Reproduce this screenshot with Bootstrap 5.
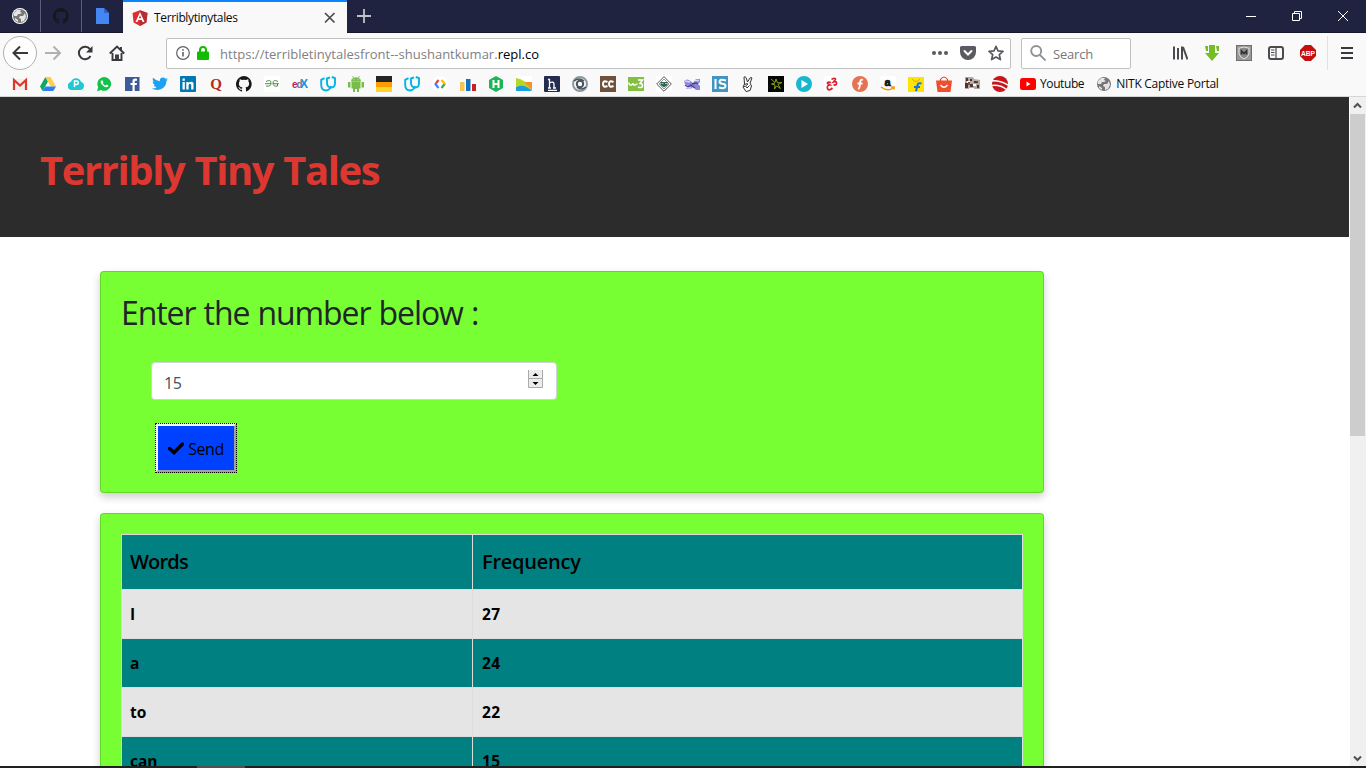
<!DOCTYPE html>
<html lang="en">
<head>
<meta charset="utf-8">
<meta name="viewport" content="width=device-width, initial-scale=1">
<title>Terriblytinytales</title>
<link href="https://cdn.jsdelivr.net/npm/bootstrap@5.3.0/dist/css/bootstrap.min.css" rel="stylesheet">
<style>
body{font-family:"Open Sans","Noto Sans",sans-serif;color:#212529}
.chrome-text{font-size:12px;line-height:16px;color:#0c0c0d;white-space:nowrap}
.tabstrip{height:33px;background:#202340;border-bottom:1px solid #15172b}
.pinned{width:41px;height:32px;border-right:1px solid #5c5e75}
.pinned.last-pin{border-right:0}
.tab-current{width:224px;height:33px;background:#f9f9fa;border-top:2px solid #0a84ff;padding:0 10px 0 9px}
.win-controls{width:138px}
.win-controls>span{width:46px}
.toolbar{height:40px;background:#f9f9fa}
.field{height:31px;background:#fff;border:1px solid #c0c0c0;border-radius:2px}
.urltext{font-size:13px;letter-spacing:.01px;color:#808084}
.backbtn{width:34px;height:34px;border:1px solid #b1b1b1;border-radius:50%;background:#fdfdfd;margin-left:3px}
.bookmarks{height:24px;background:#f9f9fa;border-bottom:1px solid #d6d6d8;padding:3px 0 0 12px;gap:12px}
.bookmarks svg,.ico{width:16px;height:16px;flex:none;display:block}
.viewport-area{height:669px}
.page-pane{width:1349px}
.site-header{height:140px;background:#2c2c2c;padding:44px 40px}
.site-title{font-size:40px;font-weight:700;line-height:58px;color:#dc3831;white-space:nowrap;letter-spacing:-1.4px;word-spacing:1px}
.panel-card{width:944px;background:#78ff33;border-color:rgba(0,0,0,.16);border-radius:4px;box-shadow:0 4px 8px 0 rgba(0,0,0,.2)}
.panel-card .card-body{padding:20px}
.prompt{font-size:32px;font-weight:400;line-height:38px;letter-spacing:-1.1px;word-spacing:1px;white-space:nowrap}
.num-field{width:406px;height:38px;border:1px solid #ced4da;border-radius:4px;background:#fff;padding:0 13px 0 12px;color:#495057;font-size:16px}
.send.btn{width:82px;height:50px;outline:1px dotted #000;outline-offset:-1px;border:3px solid;border-color:#f6f6ff #a0a0a8 #a0a0a8 #f6f6ff;background:#0040ff;border-radius:0;color:#000;font-size:16px;letter-spacing:-.5px;padding:1px 0 0}
.freq{border-color:#dee2e6;table-layout:fixed;width:902px;font-weight:700;font-size:15.5px;border-collapse:collapse}
.freq td,.freq th{border:1px solid #ddd;padding:0 8px;height:49px;vertical-align:middle;line-height:24px;background:#e5e5e5;color:#000}
.freq td+td,.freq th+th{padding-left:9px;letter-spacing:.3px}
.freq th{height:55px;font-size:20px;letter-spacing:-.8px;font-weight:600}
.freq th+th{letter-spacing:-.25px}
.freq th,.freq tr:nth-child(even) td{background:#008080}
.freq th:first-child{width:351px}
.scroll-rail{width:16px;background:#f0f0f0}
.scroll-thumb{height:322px;width:15px;background:#cdcdcd}
.taskedge{height:2px;background:#202020;padding-left:197px}
.taskedge>span{width:48px;height:2px;background:#505050}
</style>
</head>
<body class="vh-100 overflow-hidden d-flex flex-column bg-white">
<svg width="0" height="0" class="position-absolute" aria-hidden="true">
<defs>
<symbol id="globe" viewBox="0 0 16 16"><circle cx="8" cy="8" r="7" fill="#777"/><path d="M2 5 5 2l4 0-1 2 2 1-2 1-2 0-1 2-3 0zM8 8l3 0 2-3 1 4-2 4-3 1 0-3-2-1zM3 10l3 2 0 2-3-2z" fill="#e4e4e4"/></symbol>
<symbol id="cat" viewBox="0 0 16 16"><path d="M8 0a8 8 0 0 0-2.53 15.59c.4.07.55-.17.55-.38v-1.49c-2.23.48-2.7-1.07-2.7-1.07-.36-.93-.89-1.18-.89-1.18-.73-.5.06-.49.06-.49.8.06 1.23.83 1.23.83.71 1.22 1.87.87 2.33.66.07-.52.28-.87.5-1.07-1.77-.2-3.64-.89-3.64-3.95 0-.87.31-1.59.82-2.15-.08-.2-.36-1.02.08-2.12 0 0 .67-.21 2.2.82a7.6 7.6 0 0 1 4 0c1.53-1.04 2.2-.82 2.2-.82.44 1.1.16 1.92.08 2.12.51.56.82 1.27.82 2.15 0 3.07-1.87 3.75-3.65 3.95.29.25.54.73.54 1.48v2.2c0 .21.15.46.55.38A8 8 0 0 0 8 0z" fill="#15171a"/></symbol>
<symbol id="udacity" viewBox="0 0 16 16"><path d="M4.500 2.200 1.200 3.800V9q.3 5.500 4.800 5.500 3.500 0 5-4.500M11.800 1 15 2.200V7q0 4.500-3.500 4.500Q7 11.500 7 7V2.500L10 1.300" fill="none" stroke="#02b3e4" stroke-width="1.900"/></symbol>
</defs>
</svg>

<!-- Tab strip -->
<div class="tabstrip d-flex flex-shrink-0">
  <div class="pinned d-flex align-items-center justify-content-center"><svg class="ico" viewBox="0 0 16 16"><circle cx="8" cy="8" r="8" fill="#fff"/><use href="#globe" width="16" height="16"/></svg></div>
  <div class="pinned d-flex align-items-center justify-content-center"><svg class="ico"><use href="#cat"/></svg></div>
  <div class="pinned last-pin d-flex align-items-center justify-content-center"><svg class="ico" viewBox="0 0 16 16"><path d="M1 0h8l5 5v11H1z" fill="#4587f2"/><path d="m9 .5 4.500 4.500H9z" fill="#2b63c6"/></svg></div>
  <div class="tab-current d-flex align-items-center">
    <svg class="ico" viewBox="0 0 16 16"><path d="m8 .3 7.500 2.600-1.100 9.700L8 16l-6.400-3.400L.5 2.900z" fill="#df2e31"/><path d="m8 .3 7.500 2.600-1.100 9.700L8 16z" fill="#b52e31"/><path d="M8 2 3.500 12h1.900l.9-2.100h3.400l.9 2.100h1.900zM8 5.300l1.200 3H6.800z" fill="#fff" fill-rule="evenodd"/></svg>
    <span class="chrome-text ms-1 flex-grow-1" style="letter-spacing:-.36px;padding-left:2px">Terriblytinytales</span>
    <svg width="14" height="14" viewBox="0 0 14 14"><path d="m2 2 9.500 9.500m0-9.500L2 11.500" stroke="#4a4a4f" stroke-width="1.700"/></svg>
  </div>
  <div class="d-flex align-items-center" style="padding-left:10px"><svg width="14" height="14" viewBox="0 0 14 14"><path d="M7 0v14M0 7h14" stroke="#c2c2ca" stroke-width="1.800"/></svg></div>
  <div class="win-controls d-flex ms-auto align-items-center">
    <span class="d-flex justify-content-center"><svg width="10" height="10"><path d="M0 5.500h10" stroke="#fff"/></svg></span>
    <span class="d-flex justify-content-center"><svg width="10" height="10" fill="none" stroke="#fff"><path d="M.5 2.500h7v7h-7zM2.500 2.500v-2h7v7h-2"/></svg></span>
    <span class="d-flex justify-content-center"><svg width="10" height="10"><path d="m0 0 10 10M10 0 0 10" stroke="#fff"/></svg></span>
  </div>
</div>

<!-- Navigation toolbar -->
<div class="toolbar d-flex align-items-center flex-shrink-0">
  <span class="backbtn d-flex align-items-center justify-content-center"><svg class="ico" viewBox="0 0 16 16" fill="none" stroke="#38383d" stroke-width="2"><path d="M1 8h15M8 1.500 1.500 8 8 14.500"/></svg></span>
  <svg class="ico" style="margin-left:8px" viewBox="0 0 16 16" fill="none" stroke="#b1b1b3" stroke-width="2"><path d="M0 8h15M8.500 1.500 15 8l-6.500 6.500"/></svg>
  <svg class="ico ms-3" viewBox="0 0 16 16"><path d="M13.500 11A6.200 6.200 0 1 1 13 4.200" fill="none" stroke="#38383d" stroke-width="2"/><path d="M15.500 1v6.500H9z" fill="#38383d"/></svg>
  <svg class="ico ms-3" viewBox="0 0 16 16"><path d="m.8 8.500 7.200-7 7.200 7M3.500 8v7H12.500V8M7 15v-4.500h2V15M12 2v3" fill="none" stroke="#38383d" stroke-width="1.900"/></svg>
  <div class="field d-flex align-items-center" style="width:845px;margin-left:41px;padding:0 6px 0 9px">
    <svg width="14" height="14" viewBox="0 0 14 14"><circle cx="7" cy="7" r="6.300" fill="none" stroke="#606066" stroke-width="1.200"/><path d="M7 6v4.500M7 3.200v1.500" stroke="#606066" stroke-width="1.600"/></svg>
    <svg width="12" height="14" viewBox="0 0 12 14" style="margin-left:7px"><path d="M3 7V4a3 3 0 0 1 6 0v3" fill="none" stroke="#12bc00" stroke-width="2"/><rect y="5.500" width="12" height="8.500" rx="1" fill="#12bc00"/></svg>
    <span class="chrome-text urltext flex-grow-1 pt-1" style="margin-left:11px;margin-bottom:2px">https://terribletinytalesfront--shushantkumar.<span class="text-black">repl.co</span></span>
    <svg class="ico" viewBox="0 0 16 16" fill="#5a5a5f"><circle cx="2" cy="8" r="2"/><circle cx="8" cy="8" r="2"/><circle cx="14" cy="8" r="2"/></svg>
    <svg class="ico" style="margin-left:12px" viewBox="0 0 16 16"><path d="M1.500 1h13A1.500 1.500 0 0 1 16 2.500V7A8 8 0 0 1 0 7V2.500A1.500 1.500 0 0 1 1.500 1z" fill="#5a5a5f"/><path d="m4.500 6 3.500 3.500L11.500 6" fill="none" stroke="#fff" stroke-width="2" stroke-linecap="round"/></svg>
    <svg class="ico" style="margin-left:12px" viewBox="0 0 16 16"><path d="m8 1.300 2 4.500 5 .5-3.700 3.300 1.100 5L8 12l-4.400 2.600 1.100-5L1 6.300l5-.5z" fill="none" stroke="#5a5a5f" stroke-width="1.700" stroke-linejoin="round"/></svg>
  </div>
  <div class="field d-flex align-items-center" style="width:110px;margin-left:10px;padding-left:8px">
    <svg class="ico" viewBox="0 0 16 16" fill="none" stroke="#929295" stroke-width="1.900"><circle cx="6.200" cy="6" r="5"/><path d="m10 10 5.500 5.500"/></svg>
    <span class="chrome-text pt-1" style="margin:0 0 2px 7px;font-size:13px;letter-spacing:-.2px;color:#77777b">Search</span>
  </div>
  <div class="d-flex" style="margin-left:41px;gap:16px">
    <svg class="ico" viewBox="0 0 16 16" stroke="#4a4a4f" stroke-width="2"><path d="M2 1.500v13M6 3v11.500M10 1.500v13M11 2l4.500 12.500" fill="none"/></svg>
    <svg class="ico" viewBox="0 0 16 16"><path d="M5 0h6v8h4l-7 8-7-8h4zM1 1h3v5H2zM12 1h3v5h-2z" fill="#75bd24"/></svg>
    <svg class="ico" viewBox="0 0 16 16"><rect width="16" height="16" fill="#6e6e6e"/><rect x="1" y="1" width="14" height="14" fill="#999"/><path d="m8 2 5 1.200v5.300q-1 4-5 5.500Q4 12.500 3 8.500V3.200z" fill="#8a8a8a" stroke="#e4e4e4"/><path d="M5.500 9.500V6L8 8.500 10.500 6v3.500" fill="none" stroke="#333" stroke-width="1.600"/></svg>
    <svg class="ico" viewBox="0 0 16 16"><rect x="1" y="2" width="14" height="12" rx="2" fill="none" stroke="#4a4a4f" stroke-width="2"/><path d="M8 2v12M3 5h3.500M3 7.500h3.500M3 10h3.500" stroke="#4a4a4f" stroke-width="1.200"/></svg>
    <svg class="ico" viewBox="0 0 16 16"><path d="M5 0h6l5 5v6l-5 5H5l-5-5V5z" fill="#c70d0e"/><text x="8" y="10.700" text-anchor="middle" font-family="Liberation Sans" font-weight="700" font-size="7.500" fill="#fff" textLength="14" lengthAdjust="spacingAndGlyphs">ABP</text></svg>
  </div>
  <div class="border-start d-flex align-items-center" style="margin-left:11px;height:34px;padding-left:13px"><svg width="12" height="12" viewBox="0 0 12 12"><path d="M0 1h12M0 6h12M0 11h12" stroke="#38383d" stroke-width="1.900"/></svg></div>
</div>

<!-- Bookmarks bar -->
<div class="bookmarks d-flex flex-shrink-0">
  <svg viewBox="0 0 16 16"><path d="M1 3h14v11H1z" fill="#f0eeee"/><path d="M2 14V4l6 5.500L14 4v10" fill="none" stroke="#d8392b" stroke-width="2.200"/></svg>
  <svg viewBox="0 0 16 16"><path d="m5.400 1-5.400 9.500 2.600 4.500L8 5.500z" fill="#0da960"/><path d="M5.400 1h5.200l5.400 9.500h-5.300z" fill="#ffcf48"/><path d="m2.600 15 2.700-4.500H16L13.300 15z" fill="#2d7ff2"/></svg>
  <svg viewBox="0 0 16 16"><path d="M4 14a4 4 0 0 1-3-7q1.500-1.200 2-1.300a5.300 5.300 0 0 1 10 0q3 1 3 4.300-.3 4-4 4z" fill="#20c8d2"/><path d="M6.500 11V5h2a1.600 1.600 0 0 1 0 3.500h-2" fill="none" stroke="#fff" stroke-width="1.500"/></svg>
  <svg viewBox="0 0 16 16"><path d="M8.300 1A6.900 6.900 0 1 1 5 14l-4 1.200 1.200-4A6.900 6.900 0 0 1 8.300 1z" fill="#12c24b"/><path d="M5.200 4.500q-1.500 1.300.5 3.800 2.500 3 4.800 3 2.300-.5 1.800-2L10.500 8.500l-1 1.200Q7.800 9 6.700 7.300l.8-1-.8-1.800z" fill="#fff"/></svg>
  <svg viewBox="0 0 16 16"><rect x="1" y="1" width="14.500" height="14" fill="#3d5a9b"/><path d="M10.700 15V9h2l.3-2h-2.300V5.700q0-1 1.200-1H13V2.800q-4.500-1-4.500 2.500V7h-2v2h2v6z" fill="#fff"/></svg>
  <svg viewBox="0 0 16 16"><path d="M16 3.500 14.400 5c.2 7-7.600 11.500-14.400 7.600q3 0 4.700-1.400-2.300-.3-3-2.300h1.400Q.6 8 .6 5.500l1.400.4Q-.1 4 1.200 1.700q2.700 3.200 6.700 3.500C7.100 1.300 11.400.3 13.500 2.700l2-.8-1.300 1.800z" fill="#1da1f2"/></svg>
  <svg viewBox="0 0 16 16"><rect width="16" height="16" rx="1" fill="#0078b5"/><path d="M2.500 6h2.300v7.500H2.500zM2.500 2.500h2.300v2.200H2.500zM6.300 6h2.200v1q3-2.500 5 0v6.500h-2.300V9q-1.200-2.500-2.600 0v4.500H6.300z" fill="#fff"/></svg>
  <svg viewBox="0 0 16 16"><text x="8" y="12.500" text-anchor="middle" font-family="Liberation Serif" font-weight="700" font-size="15" fill="#b42b18">Q</text></svg>
  <svg><use href="#cat"/></svg>
  <svg viewBox="0 0 16 16"><rect width="16" height="16" fill="#fff"/><path d="M2 5.500Q7 3 7 7t-5 3M1 7.700h6M14 5.500Q9 3 9 7t4.500 3V8M9 7.700h6" fill="none" stroke="#4b8b45"/></svg>
  <svg viewBox="0 0 16 16"><text x="0" y="12" font-family="Liberation Sans" font-weight="700" font-size="10" fill="#b52667">e</text><text x="4.500" y="12" font-family="Liberation Sans" font-weight="700" font-size="10" fill="#70757c">d</text><text x="8" y="12" font-family="Liberation Sans" font-weight="700" font-size="12" fill="#168fe0">X</text></svg>
  <svg><use href="#udacity"/></svg>
  <svg viewBox="0 0 16 16" fill="#77bd49"><path d="M3.500 6h9v6.500h-1.500V16H9v-3H7v3H5v-3.500H3.500zM0 6h2.500v5.500H0zM13.500 6H16v5.500h-2.500z"/><path d="M3.500 5.300Q3.500 1.800 8 1.800t4.500 3.500zM4.500 0l1.500 2.500M11.500 0 10 2.500" stroke="#77bd49" stroke-width=".8"/><path d="M5.500 3.500h1v.8h-1zM9.500 3.500h1v.8h-1z" fill="#fff"/></svg>
  <svg viewBox="0 0 16 16"><path fill="#242424" d="M0 0h16v6H0z"/><path fill="#fa9c02" d="M0 6h16v5H0z"/><path fill="#fdd52c" d="M0 11h16v5H0z"/></svg>
  <svg><use href="#udacity"/></svg>
  <svg viewBox="0 0 16 16"><circle cx="8" cy="8" r="8" fill="#fff"/><g fill="none" stroke-width="2.200"><path stroke="#ea4335" d="M6.500 4 3.500 8"/><path stroke="#4285f4" d="m3 7.500 3.500 4.500"/><path stroke="#34a853" d="m9.500 12 3.500-4.500"/><path stroke="#fbbc05" d="m9.500 4 3.500 4"/></g></svg>
  <svg viewBox="0 0 16 16"><path fill="#f4c455" d="M0 6h4.500v9H0z"/><path fill="#1173be" d="M6 3h4.500v12H6z"/><path fill="#c7202c" d="M12 8h4v7h-4z"/></svg>
  <svg viewBox="0 0 16 16"><path d="m8 0 7 4v8l-7 4-7-4V4z" fill="#1cb455"/><path d="M5.500 4v8M10.500 4v8M5.500 8h5" stroke="#fff" stroke-width="2"/></svg>
  <svg viewBox="0 0 16 16"><path fill="#fff" d="M0 0h16v16H0z"/><path d="M0 2q10 1 16 13-9-7-16-4z" fill="#b6d625"/><path d="M0 11q8-4 16 4H0z" fill="#18a0de"/><path d="m8 6 8 0v9q-4-6-8-9z" fill="#f69229"/></svg>
  <svg viewBox="0 0 16 16"><rect width="16" height="16" rx="1" fill="#242c50"/><path d="M5.500 3v9M5 7q5-2 5 1v4M4 3.500h2M4 12h3M9 12h3M4 14.300h9" fill="none" stroke="#fff" stroke-width="1.300"/></svg>
  <svg viewBox="0 0 16 16" fill="none"><circle cx="8" cy="8" r="7" stroke="#8d999f" stroke-width="2"/><circle cx="8" cy="8" r="3.200" stroke="#46555d" stroke-width="2"/><path d="M2 5q5-4 10 0M14 11q-5 4-9 0" stroke="#46555d" stroke-width="1.500"/></svg>
  <svg viewBox="0 0 16 16"><rect width="16" height="16" fill="#70513c"/><path d="M7.500 6Q3 4 3 8t4.500 2M13.500 6Q9 4 9 8t4.500 2" fill="none" stroke="#fff" stroke-width="2"/></svg>
  <svg viewBox="0 0 16 16"><rect y="1" width="16" height="14" fill="#83bf41"/><path d="M1 6.500q0 3 2 2.500t2-2q0 2.500 2 2t2-1.500M10 4h4.500l-2.500 3.500q3 0 2.500 2.500t-4.500 1" fill="none" stroke="#fff" stroke-width="1.500"/></svg>
  <svg viewBox="0 0 16 16"><path fill="#fff" d="M0 0h16v16H0z"/><path d="m8 .7 7.300 7.300L8 15.300.7 8z" fill="#fff" stroke="#555"/><path d="m8 3 5 5-5 5-5-5z" fill="none" stroke="#999"/><path d="M4.500 6h7v3L8 11.500 4.500 9z" fill="#2f6650"/><path d="M5.500 7.500h2M9 7.500h2" stroke="#a9cbbd"/></svg>
  <svg viewBox="0 0 16 16"><path d="M0 5q3-3 6.500 0L9 7l3-4h4v3l-2 2 2 2v4h-4l-3-3-2 2H2l2-3-3-2z" fill="#8d87d8"/><path d="m1 9 3 2 3-2 4 3M8 8l4-1 2 1" fill="none" stroke="#48428c" stroke-width="1.300"/><path d="m1 5 5 1M11 4.500h4M3 12h4" stroke="#d9d6ff" stroke-width="1.500"/></svg>
  <svg viewBox="0 0 16 16"><rect width="16" height="16" fill="#4095c1"/><path d="M3.500 3v10M14 4.500q-6.500-2-6.500 1 0 2 3 2.300 3 .2 3 2.500-.5 3-6.500 1.200" fill="none" stroke="#fff" stroke-width="2"/></svg>
  <svg viewBox="0 0 16 16" fill="#fff" stroke="#333" stroke-width="1" stroke-linejoin="round"><path d="M4 1q1.500-.5 2 .5L7.500 6 10 2q1-1 2 0l-2 5 1.500 3-1.500 4.500-4 1L3 11l1.500-3z"/><path d="M4.500 8.500Q7 7 8 8L5.500 10l1.500 2 2.500-2.500M5 10l-1.500 1" fill="none"/></svg>
  <svg viewBox="0 0 16 16"><rect width="16" height="16" fill="#050705"/><path d="m3 3 4 3.500L8 3l1.500 4 4.500-.5-4 2 2.500 4-4-2.500-2 3 .5-4-3.500-1 3.500-1" fill="none" stroke="#8c9f1e"/></svg>
  <svg viewBox="0 0 16 16"><circle cx="8" cy="8" r="8" fill="#19b7cf"/><path d="m5.500 4 6.500 4-6.500 4z" fill="#fff"/></svg>
  <svg viewBox="0 0 16 16"><path fill="#fff" d="M0 0h16v16H0z"/><path d="M7 6.500Q3 5.500 3.500 7.500L6 9Q2.500 9.500 3.500 12.500t5-.5M7.500 3.500q4-2.500 4 0L9.500 6q3.500-1 3 1.500t-3 1" fill="none" stroke="#de1f2b" stroke-width="1.700"/></svg>
  <svg viewBox="0 0 16 16"><circle cx="8" cy="8" r="8" fill="#e57352"/><path d="M11 4Q8.500 3 8.300 5.500L7.500 11q-.5 2-1.500 1.500M5.500 7.500h5" fill="none" stroke="#fff" stroke-width="1.800"/></svg>
  <svg viewBox="0 0 16 16"><rect width="16" height="16" fill="#fff"/><text x="7.500" y="10" text-anchor="middle" font-family="Liberation Sans" font-weight="700" font-size="11" stroke="#111" stroke-width=".7" fill="#111">a</text><path d="M1 11q7 5 12 1m-2-1h3v2.500" fill="none" stroke="#f79400" stroke-width="1.500"/></svg>
  <svg viewBox="0 0 16 16"><path d="M0 1h16v15H0z" fill="#ffe400"/><path d="M4 3q4 5 8 0" fill="none" stroke="#d4ac00"/><path d="M13.500 7.500q-4-1-4 2L8 15M6 11h6" fill="none" stroke="#1a72d2" stroke-width="2.100"/></svg>
  <svg viewBox="0 0 16 16"><path d="M0 4.500h16L14.500 16h-13z" fill="#f04e2c"/><path d="M4.500 6V3.500q3.500-5 7 0V6" fill="none" stroke="#db4a2a" stroke-width="1.200"/><path d="M4.500 9q3.500 4.500 7 0" fill="none" stroke="#fff" stroke-width="1.300"/></svg>
  <svg viewBox="0 0 16 16"><path d="M1 1h8l1 2 6 1v9H1z" fill="#b5aaa2"/><path d="M2 2h2v3H2zM6 3h2v2H6zM10 5h4v2h-4zM1 7h3v5H1zM6 8h3v3H6zM13 9h2v3h-2z" fill="#473836"/><path d="M3 5h3v2H3zM9 8h3v2H9zM5 12h5v1H5z" fill="#fff"/><path d="M4 6h2v3H4zM12 5h2v1h-2z" fill="#8c4943"/></svg>
  <svg viewBox="0 0 16 16"><circle cx="8" cy="8" r="8" fill="#c8141c"/><path d="M-1 5q8-1 17 4M0 9.500q8-1 14.500 4" fill="none" stroke="#fff" stroke-width="1.500"/></svg>
  <span class="d-flex align-items-center" style="height:16px"><svg viewBox="0 0 16 16"><rect y="2" width="16" height="12" rx="2.500" fill="#f00"/><path d="m6.500 5.500 4 2.500-4 2.500z" fill="#fff"/></svg><span class="chrome-text ms-1" style="letter-spacing:-.4px">Youtube</span></span>
  <span class="d-flex align-items-center" style="height:16px"><svg><use href="#globe"/></svg><span class="chrome-text ms-1" style="letter-spacing:-.27px">NITK Captive Portal</span></span>
</div>

<!-- Page and scrollbar -->
<div class="viewport-area d-flex flex-shrink-0 overflow-hidden">
  <main class="page-pane overflow-hidden">
    <header class="site-header"><h1 class="site-title mb-0">Terribly Tiny Tales</h1></header>
    <div class="d-flex flex-column" style="padding:34px 0 0 100px;gap:20px">
      <section class="card panel-card" style="height:222px"><div class="card-body">
        <h2 class="prompt mb-0" style="padding-top:2px">Enter the number below :</h2>
        <div class="num-field d-flex align-items-center justify-content-between" style="margin:30px 0 0 30px">
          <span class="pt-1" style="letter-spacing:-.5px">15</span>
          <svg width="15" height="18" viewBox="0 0 15 18" class="mb-1"><path d="M0 0h15v18H0z" fill="#ececec"/><path d="M.5 0v17.500h14V0M0 8.500h15" fill="none" stroke="#aaa"/><path d="M4.500 6h6L7.500 3zM4.500 12h6l-3 3z" fill="#000"/></svg>
        </div>
        <button class="send btn d-flex align-items-center justify-content-center" style="margin:23px 0 0 34px"><svg width="16" height="13" viewBox="0 0 16 13" class="me-1"><path d="m1.500 6.500 4.500 4 8.500-8.500" fill="none" stroke="#000" stroke-width="3.500" stroke-linecap="round"/></svg>Send</button>
      </div></section>
      <section class="card panel-card"><div class="card-body">
        <table class="table freq mb-0">
          <thead><tr><th>Words</th><th>Frequency</th></tr></thead>
          <tbody>
            <tr><td>I</td><td>27</td></tr>
            <tr><td>a</td><td>24</td></tr>
            <tr><td>to</td><td>22</td></tr>
            <tr><td>can</td><td>15</td></tr>
          </tbody>
        </table>
      </div></section>
    </div>
  </main>
  <div class="scroll-rail d-flex flex-column align-items-center" style="margin-left:1px">
    <svg width="16" height="17" viewBox="0 0 16 17" class="flex-shrink-0"><path d="m4 10.500 3.500-3.500 3.500 3.500" fill="none" stroke="#505050" stroke-width="2"/></svg>
    <div class="scroll-thumb flex-shrink-0 align-self-start"></div>
    <svg width="16" height="17" viewBox="0 0 16 17" class="mt-auto flex-shrink-0"><path d="m4 7.500 3.500 3.500L11 7.500" fill="none" stroke="#505050" stroke-width="2"/></svg>
  </div>
</div>
<div class="taskedge d-flex flex-shrink-0"><span></span></div>
<script src="https://cdn.jsdelivr.net/npm/bootstrap@5.3.0/dist/js/bootstrap.bundle.min.js"></script>
</body>
</html>
